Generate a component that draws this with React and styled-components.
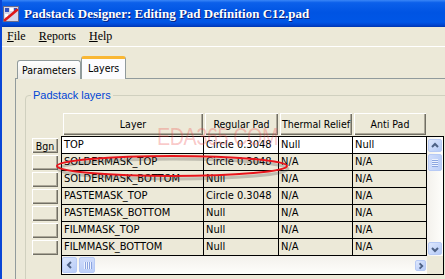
import React from 'react';
import styled, { createGlobalStyle } from 'styled-components';

const GlobalStyle = createGlobalStyle`
  html, body {
    margin: 0;
    padding: 0;
    background: #ece9d8;
  }
  * {
    box-sizing: border-box;
  }
`;

const columns = [
  { key: 'layer', title: 'Layer', width: 142 },
  { key: 'regular', title: 'Regular Pad', width: 75 },
  { key: 'thermal', title: 'Thermal Relief', width: 74 },
  { key: 'anti', title: 'Anti Pad', width: 74 },
];

const rows = [
  { label: 'Bgn', layer: 'TOP', regular: 'Circle 0.3048', thermal: 'Null', anti: 'Null' },
  { label: '', layer: 'SOLDERMASK_TOP', regular: 'Circle 0.3048', thermal: 'N/A', anti: 'N/A' },
  { label: '', layer: 'SOLDERMASK_BOTTOM', regular: 'Null', thermal: 'N/A', anti: 'N/A' },
  { label: '', layer: 'PASTEMASK_TOP', regular: 'Circle 0.3048', thermal: 'N/A', anti: 'N/A' },
  { label: '', layer: 'PASTEMASK_BOTTOM', regular: 'Null', thermal: 'N/A', anti: 'N/A' },
  { label: '', layer: 'FILMMASK_TOP', regular: 'Null', thermal: 'N/A', anti: 'N/A' },
  { label: '', layer: 'FILMMASK_BOTTOM', regular: 'Null', thermal: 'N/A', anti: 'N/A' },
];

const uiFont = `"DejaVu Sans Condensed", "Liberation Sans", sans-serif`;

function AppIcon() {
  return (
    <svg width="16" height="16" viewBox="0 0 16 16">
      <rect x="0.5" y="0.5" width="15" height="15" fill="#d8d8e8" stroke="#6a6a8a" />
      <rect x="2" y="2" width="4" height="4" fill="#3050c0" />
      <rect x="7" y="2" width="3" height="3" fill="#ffffff" />
      <rect x="11" y="2" width="3" height="3" fill="#3050c0" />
      <rect x="2" y="8" width="3" height="3" fill="#ffffff" />
      <path d="M2 14 L14 4" stroke="#e01818" strokeWidth="2.6" strokeLinecap="round" />
    </svg>
  );
}

function Chevron({ dir }) {
  const paths = {
    up: 'M2 6 L5 3 L8 6',
    down: 'M2 4 L5 7 L8 4',
    left: 'M6 2 L3 5 L6 8',
    right: 'M4 2 L7 5 L4 8',
  };
  return (
    <svg width="10" height="10" viewBox="0 0 10 10">
      <path d={paths[dir]} fill="none" stroke="#4d6185" strokeWidth="2" />
    </svg>
  );
}

export default function App() {
  return (
    <>
      <GlobalStyle />
      <Window>
        <TitleBar>
          <AppIcon />
          <TitleText>Padstack Designer: Editing Pad Definition C12.pad</TitleText>
        </TitleBar>
        <MenuBar>
          <MenuItem><u>F</u>ile</MenuItem>
          <MenuItem><u>R</u>eports</MenuItem>
          <MenuItem><u>H</u>elp</MenuItem>
        </MenuBar>
        <Body>
          <TabStrip>
            <Tab>Parameters</Tab>
            <Tab $active>Layers</Tab>
          </TabStrip>
          <Panel>
            <GroupBox>
              <Legend>Padstack layers</Legend>
              <LayerGrid>
                <Corner />
                <HeaderRow>
                  {columns.map((c) => (
                    <HeaderCell key={c.key} style={{ width: c.width }}>
                      <RaisedButton>{c.title}</RaisedButton>
                    </HeaderCell>
                  ))}
                </HeaderRow>
                <RowHeads>
                  {rows.map((r, i) => (
                    <RowHeadCell key={i}>
                      <RowButton>{r.label}</RowButton>
                    </RowHeadCell>
                  ))}
                </RowHeads>
                <DataBox>
                  <Rows>
                    {rows.map((r, i) => (
                      <DataRow key={i} $selected={i === 0}>
                        {columns.map((c) => (
                          <DataCell key={c.key} style={{ width: c.width }}>
                            {r[c.key]}
                          </DataCell>
                        ))}
                      </DataRow>
                    ))}
                  </Rows>
                  <VScroll>
                    <ArrowButton $w={14} $h={13}><Chevron dir="up" /></ArrowButton>
                    <VThumb>
                      <GripLine /><GripLine /><GripLine /><GripLine />
                    </VThumb>
                    <Spacer />
                    <ArrowButton $w={14} $h={13}><Chevron dir="down" /></ArrowButton>
                  </VScroll>
                  <HScroll>
                    <ArrowButton $w={15} $h={16}><Chevron dir="left" /></ArrowButton>
                    <HThumb>
                      <VGrip /><VGrip /><VGrip /><VGrip />
                    </HThumb>
                    <Spacer />
                    <SmallArrow><Chevron dir="right" /></SmallArrow>
                  </HScroll>
                  <ScrollCorner />
                </DataBox>
              </LayerGrid>
            </GroupBox>
          </Panel>
        </Body>
        <Watermark>EDA365.COM</Watermark>
        <Highlight width="250" height="32" viewBox="0 0 250 32">
          <ellipse cx="121" cy="18" rx="115" ry="10" fill="none" stroke="rgba(60,60,60,0.25)" strokeWidth="3" />
          <ellipse cx="120" cy="15" rx="115" ry="10" fill="none" stroke="#e8141b" strokeWidth="2" />
        </Highlight>
      </Window>
    </>
  );
}

const Window = styled.div`
  position: relative;
  width: 445px;
  height: 279px;
  overflow: hidden;
  background: #ece9d8;
  border-left: 2px solid #0a46d6;
  display: flex;
  flex-direction: column;
`;

const TitleBar = styled.div`
  height: 27px;
  flex: none;
  display: flex;
  align-items: center;
  gap: 5px;
  padding-left: 1px;
  background: linear-gradient(#3a86f7 0%, #0c60ea 10%, #0054e3 45%, #0056e6 82%, #0046d2 92%, #0036b0 100%);
`;

const TitleText = styled.span`
  font-family: "Liberation Serif", serif;
  font-weight: 700;
  font-size: 13px;
  color: #ffffff;
  white-space: nowrap;
  text-shadow: 1px 1px 0 #0a1f7a;
`;

const MenuBar = styled.div`
  height: 20px;
  flex: none;
  display: flex;
  align-items: center;
  gap: 13px;
  padding-left: 5px;
  border-bottom: 1px solid #ffffff;
  font-family: "Liberation Serif", serif;
  font-size: 12px;
  color: #000000;
`;

const MenuItem = styled.span`
  u {
    text-decoration: underline;
  }
`;

const Body = styled.div`
  flex: 1;
  padding: 10px 0 0 13px;
  display: flex;
  flex-direction: column;
`;

const TabStrip = styled.div`
  display: flex;
  align-items: flex-end;
  height: 22px;
  padding-left: 2px;
  margin-bottom: -1px;
  position: relative;
  z-index: 1;
`;

const Tab = styled.div`
  height: ${(p) => (p.$active ? '23px' : '19px')};
  padding: ${(p) => (p.$active ? '2px 6px 0' : '2px 4px 0')};
  border: 1px solid #919b9c;
  border-bottom: none;
  border-top: ${(p) => (p.$active ? '3px solid #f9b734' : '1px solid #919b9c')};
  border-radius: 3px 3px 0 0;
  background: ${(p) => (p.$active ? '#fcfcfe' : 'linear-gradient(#ffffff, #ecebe5)')};
  font-family: ${uiFont};
  font-size: 10.5px;
  line-height: 15px;
  color: #000000;
  white-space: nowrap;
`;

const Panel = styled.div`
  flex: 1;
  width: 460px;
  border: 1px solid #919b9c;
  background: #ece9d8;
`;

const GroupBox = styled.div`
  position: relative;
  width: 460px;
  height: 200px;
  margin: 16px 0 0 9px;
  padding: 17px 0 0 6px;
  border: 1px solid #d0d0bf;
  border-radius: 4px;
`;

const Legend = styled.span`
  position: absolute;
  top: -8px;
  left: 5px;
  padding: 0 2px;
  background: #ece9d8;
  font-family: "Liberation Sans", sans-serif;
  font-size: 11px;
  line-height: 14px;
  color: #0046d5;
`;

const LayerGrid = styled.div`
  display: grid;
  grid-template-columns: 26px 383px;
  grid-template-rows: 22px auto;
  column-gap: 3px;
  row-gap: 1px;
`;

const Corner = styled.div``;

const HeaderRow = styled.div`
  display: flex;
  padding-left: 1px;
`;

const HeaderCell = styled.div`
  display: flex;
  padding: 0 1px;
`;

const RaisedButton = styled.div`
  flex: 1;
  display: flex;
  align-items: center;
  justify-content: center;
  background: #ece9d8;
  box-shadow: inset 1px 1px 0 #ffffff, inset -1px -1px 0 #716f64, inset -2px -2px 0 #aca899;
  font-family: ${uiFont};
  font-size: 10.5px;
  color: #000000;
  white-space: nowrap;
  overflow: hidden;
`;

const RowHeads = styled.div`
  display: flex;
  flex-direction: column;
  padding-top: 1px;
`;

const RowHeadCell = styled.div`
  height: 17px;
  display: flex;
  align-items: flex-end;
  padding-bottom: 1px;
`;

const RowButton = styled(RaisedButton)`
  height: 15px;
`;

const DataBox = styled.div`
  width: 383px;
  border: 1px solid #000000;
  display: grid;
  grid-template-columns: 365px 16px;
  grid-template-rows: 119px 18px;
`;

const Rows = styled.div`
  display: flex;
  flex-direction: column;
`;

const DataRow = styled.div`
  display: flex;
  height: 17px;
  border-bottom: 1px solid #000000;
  background: ${(p) => (p.$selected ? '#ffffff' : '#ece9d8')};
`;

const DataCell = styled.div`
  border-right: 1px solid #000000;
  padding-left: 2px;
  font-family: ${uiFont};
  font-size: 11px;
  line-height: 16px;
  color: #000000;
  white-space: nowrap;
  overflow: hidden;
`;

const VScroll = styled.div`
  display: flex;
  flex-direction: column;
  align-items: center;
  padding: 2px 0 1px;
  gap: 2px;
  background: linear-gradient(90deg, #f3f1ec, #fefefb);
`;

const ArrowButton = styled.div`
  width: ${(p) => p.$w}px;
  height: ${(p) => p.$h}px;
  flex: none;
  display: flex;
  align-items: center;
  justify-content: center;
  border: 1px solid #b7caf5;
  border-radius: 2px;
  background: linear-gradient(135deg, #dde7fd, #b6cbf7);
`;

const SmallArrow = styled(ArrowButton)`
  width: 11px;
  height: 11px;
  margin: 3px 1px 0 0;
`;

const VThumb = styled.div`
  width: 14px;
  height: 17px;
  display: flex;
  flex-direction: column;
  align-items: center;
  justify-content: center;
  gap: 1px;
  border: 1px solid #b7caf5;
  border-radius: 2px;
  background: linear-gradient(90deg, #cfdcfb, #bccff8);
`;

const GripLine = styled.div`
  width: 6px;
  height: 1px;
  background: #eef3fe;
  box-shadow: 0 1px 0 #8ca5e0;
`;

const HScroll = styled.div`
  display: flex;
  align-items: flex-start;
  padding-top: 1px;
  gap: 2px;
  background: linear-gradient(#f3f1ec, #fefefb);
`;

const HThumb = styled.div`
  width: 16px;
  height: 16px;
  display: flex;
  align-items: center;
  justify-content: center;
  gap: 1px;
  border: 1px solid #b7caf5;
  border-radius: 2px;
  background: linear-gradient(#cfdcfb, #bccff8);
`;

const VGrip = styled.div`
  width: 1px;
  height: 7px;
  background: #eef3fe;
  box-shadow: 1px 0 0 #8ca5e0;
`;

const Spacer = styled.div`
  flex: 1;
`;

const ScrollCorner = styled.div`
  background: #ece9d8;
`;

const Watermark = styled.div`
  position: absolute;
  left: 155px;
  top: 124px;
  font-family: "Liberation Sans", sans-serif;
  font-size: 23px;
  letter-spacing: -0.5px;
  color: rgba(236, 70, 70, 0.3);
  transform: scaleX(0.86);
  transform-origin: left top;
  pointer-events: none;
`;

const Highlight = styled.svg`
  position: absolute;
  left: 50px;
  top: 151px;
  pointer-events: none;
`;
